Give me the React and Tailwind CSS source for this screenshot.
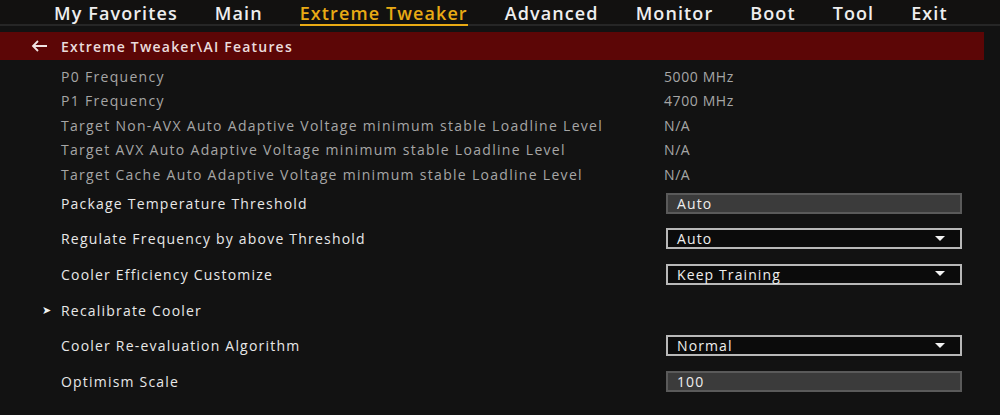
import React from 'react';

const tabs = ['My Favorites', 'Main', 'Extreme Tweaker', 'Advanced', 'Monitor', 'Boot', 'Tool', 'Exit'];

const infoRows = [
  ['P0 Frequency', '5000 MHz'],
  ['P1 Frequency', '4700 MHz'],
  ['Target Non-AVX Auto Adaptive Voltage minimum stable Loadline Level', 'N/A'],
  ['Target AVX Auto Adaptive Voltage minimum stable Loadline Level', 'N/A'],
  ['Target Cache Auto Adaptive Voltage minimum stable Loadline Level', 'N/A'],
];

const settings = [
  { label: 'Package Temperature Threshold', type: 'input', value: 'Auto' },
  { label: 'Regulate Frequency by above Threshold', type: 'select', value: 'Auto' },
  { label: 'Cooler Efficiency Customize', type: 'select', value: 'Keep Training' },
  { label: 'Recalibrate Cooler', type: 'submenu' },
  { label: 'Cooler Re-evaluation Algorithm', type: 'select', value: 'Normal' },
  { label: 'Optimism Scale', type: 'input', value: '100' },
];

const Field = ({ type, value }) => {
  if (type === 'input') {
    return (
      <div className="w-[296px] h-[21px] flex items-center px-[9px] bg-[#3b3b3b] border-2 border-[#5a5a5a] text-[14px] font-medium tracking-[1.1px] text-[#eeeeee]">
        {value}
      </div>
    );
  }
  return (
    <div className="w-[296px] h-[21px] flex items-center justify-between px-[9px] bg-[#0b0b0b] border-2 border-[#b8b8b8] text-[14px] font-medium tracking-[1.1px] text-[#eeeeee]">
      <span>{value}</span>
      <svg width="10" height="6" viewBox="0 0 10 6" className="mr-[6px]">
        <polygon points="0,0 10,0 5,5" fill="#f2f2f2" />
      </svg>
    </div>
  );
};

export default function App() {
  return (
    <div
      className="w-[1000px] h-[415px] bg-[#121212] overflow-hidden"
      style={{ fontFamily: '"Open Sans", "Noto Sans", sans-serif' }}
    >
      {/* top menu */}
      <div className="h-[26px] flex items-center pl-[54px] gap-[37px] bg-[#121110] border-b-2 border-[#262626]">
        {tabs.map((t) => (
          <span
            key={t}
            className={
              t === 'Extreme Tweaker'
                ? 'text-[18px] leading-[22px] tracking-[1.1px] font-semibold text-[#e9aa14] border-b-2 border-[#e9aa14] mt-[4px]'
                : 'text-[18px] leading-[22px] tracking-[1.1px] font-semibold text-[#eeeeee] mt-[2px]'
            }
          >
            {t}
          </span>
        ))}
      </div>

      {/* breadcrumb bar */}
      <div className="mt-[6px] w-[984px] h-[28px] bg-[#5c0606] flex items-center pl-[31px]">
        <svg width="17" height="12" viewBox="0 0 17 12" className="mr-[13px]">
          <path d="M16 6H2M7 1L2 6l5 5" stroke="#f0e4e4" strokeWidth="1.8" fill="none" />
        </svg>
        <span className="text-[14px] font-semibold tracking-[1.2px] text-[#eadcdc]">Extreme Tweaker\AI Features</span>
      </div>

      {/* info rows */}
      <div className="mt-[4px]">
        {infoRows.map(([label, value]) => (
          <div key={label} className="h-[24.5px] flex items-center text-[14px] text-[#a6a6a6]">
            <span className="pl-[61px] w-[664px] tracking-[1.3px]">{label}</span>
            <span className="tracking-[0.6px]">{value}</span>
          </div>
        ))}
      </div>

      {/* settings */}
      <div className="mt-[-1px]">
        {settings.map((s) => (
          <div key={s.label} className="h-[35.6px] flex items-center">
            <div className="w-[666px] flex items-center text-[14px] font-medium tracking-[1.2px] text-[#e8e8e8]">
              {s.type === 'submenu' ? (
                <span className="w-[61px] pl-[42px] text-[11px] text-[#f0f0f0]">➤</span>
              ) : (
                <span className="w-[61px]" />
              )}
              <span>{s.label}</span>
            </div>
            {s.type !== 'submenu' && <Field type={s.type} value={s.value} />}
          </div>
        ))}
      </div>
    </div>
  );
}
